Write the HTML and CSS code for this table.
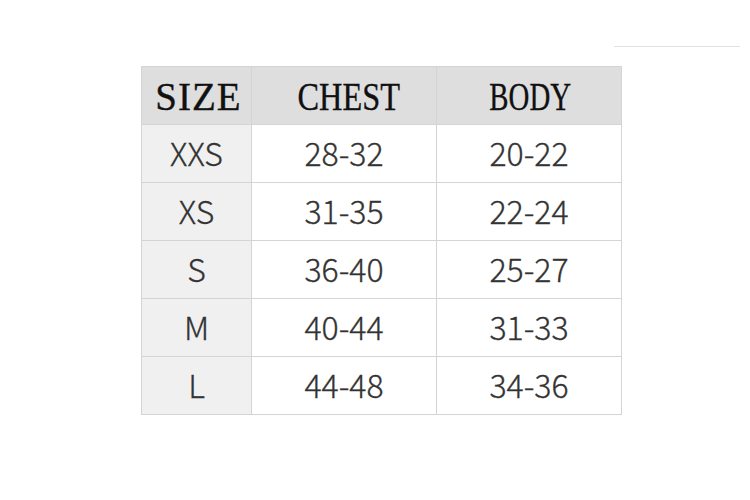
FILE: index.html
```html
<!DOCTYPE html>
<html>
<head>
<meta charset="utf-8">
<link rel="stylesheet" href="styles.css">
</head>
<body>
<div class="page">
  <div class="topbar"><div class="rule"></div></div>
  <div class="chart">
    <div class="cell head"><span class="h h-size">SIZE</span></div>
    <div class="cell head"><span class="h h-chest">CHEST</span></div>
    <div class="cell head"><span class="h h-body">BODY</span></div>

    <div class="cell size">XXS</div><div class="cell">28-32</div><div class="cell">20-22</div>
    <div class="cell size">XS</div><div class="cell">31-35</div><div class="cell">22-24</div>
    <div class="cell size">S</div><div class="cell">36-40</div><div class="cell">25-27</div>
    <div class="cell size">M</div><div class="cell">40-44</div><div class="cell">31-33</div>
    <div class="cell size">L</div><div class="cell">44-48</div><div class="cell">34-36</div>
  </div>
</div>
</body>
</html>
```

FILE: styles.css
```css
html, body {
  margin: 0;
  padding: 0;
  background: #ffffff;
}

.page {
  width: 750px;
  height: 500px;
  padding-top: 46px;
  box-sizing: border-box;
}

.topbar {
  display: flex;
  justify-content: flex-end;
  padding-right: 10px;
}

.rule {
  width: 126px;
  height: 1px;
  background: #e2e2e2;
}

.chart {
  margin-top: 19px;
  margin-left: 141px;
  width: 481px;
  display: grid;
  grid-template-columns: 109px 184px 184px;
  grid-auto-rows: 57px;
  gap: 1px;
  padding: 1px;
  box-sizing: border-box;
  background: #d4d4d4;
}

.cell {
  background: #ffffff;
  display: flex;
  align-items: center;
  justify-content: center;
  padding-bottom: 3px;
  font-family: "Noto Sans CJK SC", "Noto Sans", sans-serif;
  font-weight: 300;
  font-size: 32px;
  color: #333333;
  line-height: 1;
  -webkit-text-stroke: 0.3px #333333;
}

.cell.size {
  background: #f0f0f0;
}

.cell.head {
  background: #dedede;
  padding-top: 2px;
  padding-bottom: 0;
  -webkit-text-stroke: 0;
}

.h {
  display: inline-block;
  font-family: "Liberation Serif", "Times New Roman", serif;
  font-size: 39px;
  color: #111111;
  -webkit-text-stroke: 0.35px #111111;
}

.h-size {
  margin-left: 4px;
  letter-spacing: 1px;
}

.h-chest {
  margin-left: 10px;
  transform: scaleX(0.83);
}

.h-body {
  margin-left: 3px;
  transform: scaleX(0.74);
}
```
